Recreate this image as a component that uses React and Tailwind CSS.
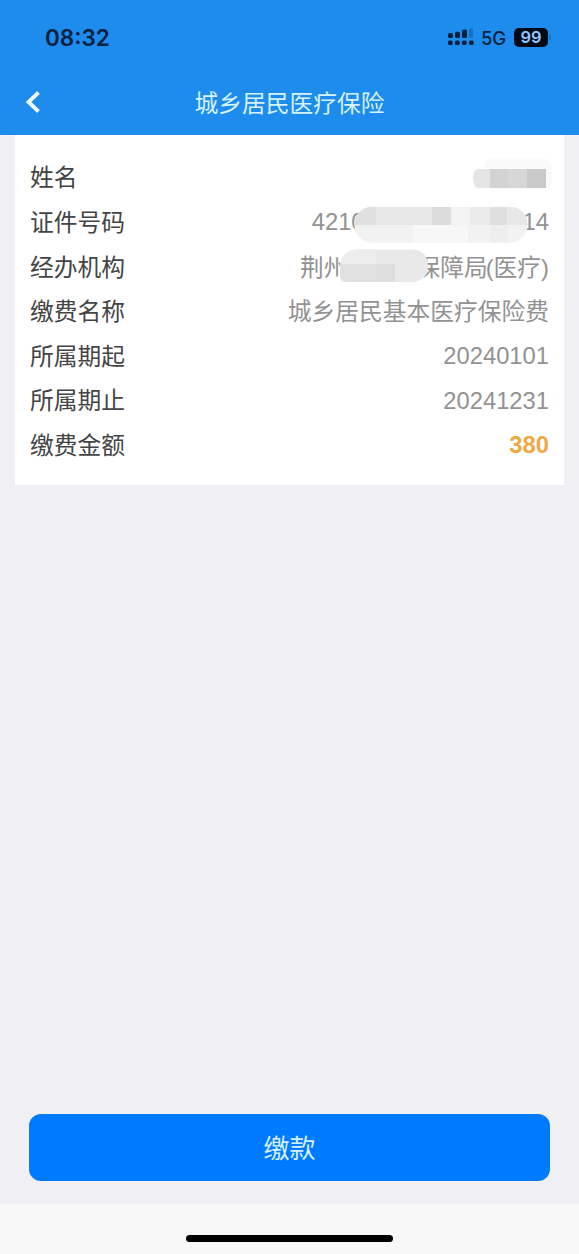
import React from "react";

function Row({ label, children }) {
  return (
    <div className="flex h-[44.6px] items-center justify-between">
      <span className="pt-[2px] text-[#444444]">{label}</span>
      <div className="relative flex h-full items-center text-[#929292]">{children}</div>
    </div>
  );
}

function StatusIcons() {
  return (
    <div className="flex items-center text-[#04203f]">
      <svg width="27" height="20" viewBox="0 0 27 20" fill="#04203f">
        <rect x="1" y="6" width="5" height="5" rx="1.5" />
        <rect x="8" y="4.8" width="5" height="6.200" rx="1.5" />
        <rect x="15" y="2.500" width="5" height="8.5" rx="1.5" />
        <rect x="22" y="1.500" width="4" height="9.5" rx="1.5" opacity="0.25" />
        <rect x="1" y="13.500" width="4.6" height="4.6" rx="1.5" />
        <rect x="8" y="13.500" width="4.6" height="4.6" rx="1.5" />
        <rect x="15" y="13.500" width="4.6" height="4.6" rx="1.5" />
        <rect x="22" y="13.500" width="4.6" height="4.6" rx="1.5" />
      </svg>
      <span className="ml-[7px] w-[25px] pt-px font-['Inter',sans-serif] text-[18.5px] leading-5 font-medium tracking-[-0.3px]">5G</span>
      <span className="ml-[8px] flex h-[19px] w-[34px] items-center justify-center rounded-[5px] bg-[#020a18] font-['Inter',sans-serif] text-[16.5px] leading-none font-semibold text-[#8fc6fa]">
        99
      </span>
      <span className="ml-[1px] h-[6px] w-[2px] rounded-r-full bg-[#176fbd]" />
    </div>
  );
}

function NameMask() {
  return (
    <svg className="absolute top-[3px] right-[-5px]" width="84" height="38" viewBox="470 158 84 38">
      <rect x="484" y="158" width="68" height="31" rx="9" fill="#fafafa" />
      <path d="M478 169H491V188H478Q473 187 473 178.500Q473 170 478 169Z" fill="#e5e5e5" />
      <path d="M490 169h18v19h-18z" fill="#d3d3d3" />
      <path d="M508 169h19v19h-19z" fill="#d7d7d7" />
      <path d="M527 169h19v19h-19z" fill="#c9c9c9" />
    </svg>
  );
}

function NumberMask() {
  return (
    <svg className="absolute top-[7px] left-[42px]" width="175" height="36" viewBox="354 207 175 36">
      <defs>
        <clipPath id="number-mask">
          <rect x="354.500" y="207" width="173" height="35.500" rx="17" />
        </clipPath>
      </defs>
      <g clipPath="url(#number-mask)">
        <path d="M354 207h175v36H354z" fill="#f2f2f2" />
        <path d="M354 207h22v18h-22z" fill="#e0e0e0" />
        <path d="M376 207h56v18h-56z" fill="#e7e7e7" />
        <path d="M432 207h19v18h-19z" fill="#dcdcdc" />
        <path d="M451 207h19v18h-19z" fill="#f3f3f3" />
        <path d="M470 207h20v18h-20z" fill="#ebebeb" />
        <path d="M490 207h17v18h-17z" fill="#dfdfdf" />
        <path d="M507 207h22v18h-22z" fill="#e8e8e8" />
        <path d="M413 225h55v18h-55z" fill="#f7f7f7" />
        <path d="M490 225h18v18h-18z" fill="#eeeeee" />
      </g>
    </svg>
  );
}

function AgencyMask() {
  return (
    <svg className="absolute top-[5px] left-[40px]" width="90" height="34" viewBox="340 249 90 34">
      <defs>
        <clipPath id="agency-mask">
          <path d="M357 249.500H413Q428 251 428 266Q428 280 413 282H346Q340 282 340 275V266Q341 251 357 249.500Z" />
        </clipPath>
      </defs>
      <g clipPath="url(#agency-mask)">
        <path d="M340 249h90v34h-90z" fill="#e9e9e9" />
        <path d="M340 249h36v15h-36z" fill="#ededed" />
        <path d="M340 264h55v19h-55z" fill="#e1e1e1" />
        <path d="M376 264h19v19h-19z" fill="#dedede" />
      </g>
    </svg>
  );
}

export default function App() {
  return (
    <div className="flex h-[1254px] w-[579px] flex-col overflow-hidden bg-[#efeff4] font-['Liberation_Sans','Noto_Sans_CJK_SC',sans-serif]">
      <header className="h-[135px] shrink-0 bg-[#1d8ced]">
        <div className="flex h-[74px] items-center justify-between pr-[28px] pl-[45px]">
          <span className="pt-[2px] font-['Inter',sans-serif] text-[22.5px] leading-none font-semibold text-[#04203f]">08:32</span>
          <StatusIcons />
        </div>
        <div className="grid h-[58px] grid-cols-[60px_1fr_60px] items-center">
          <svg className="ml-[24px]" width="18" height="24" viewBox="0 0 18 24" fill="none" stroke="#effaff" strokeWidth="3.800">
            <path d="M14.500 1.500L4.500 11L14.500 20.500" />
          </svg>
          <h1 className="pt-[2px] text-center text-[23.75px] leading-none text-[#d6f2ff]">城乡居民医疗保险</h1>
        </div>
      </header>

      <main className="flex flex-1 flex-col">
        <section className="mx-[15px] h-[349.500px] bg-white pt-[20px] pr-[15px] pl-[15px] text-[23.75px] leading-none">
          <Row label="姓名">
            <NameMask />
          </Row>
          <Row label="证件号码">
            <span>4210</span>
            <span className="ml-[158px]">14</span>
            <NumberMask />
          </Row>
          <Row label="经办机构">
            <span className="pt-[2px]">荆州</span>
            <span className="ml-[69px] pt-[2px]">保障局</span>
            <span className="-ml-[2px] pt-[2px]">(医疗)</span>
            <AgencyMask />
          </Row>
          <Row label="缴费名称">
            <span className="pt-[2px]">城乡居民基本医疗保险费</span>
          </Row>
          <Row label="所属期起">20240101</Row>
          <Row label="所属期止">
            <span className="pt-px">20241231</span>
          </Row>
          <Row label="缴费金额">
            <span className="pt-px font-bold text-[#efa843]">380</span>
          </Row>
        </section>
        <div className="mt-auto px-[29px] pb-[23px]">
          <button className="flex h-[67px] w-full items-center justify-center rounded-[12px] bg-[#007aff] pt-[3px] text-[26px] leading-none text-[#d6f1ff]">
            缴款
          </button>
        </div>
      </main>

      <footer className="flex h-[50px] shrink-0 justify-center bg-[#f8f8f8] pt-[31px]">
        <div className="h-[7px] w-[207px] rounded-full bg-black" />
      </footer>
    </div>
  );
}
